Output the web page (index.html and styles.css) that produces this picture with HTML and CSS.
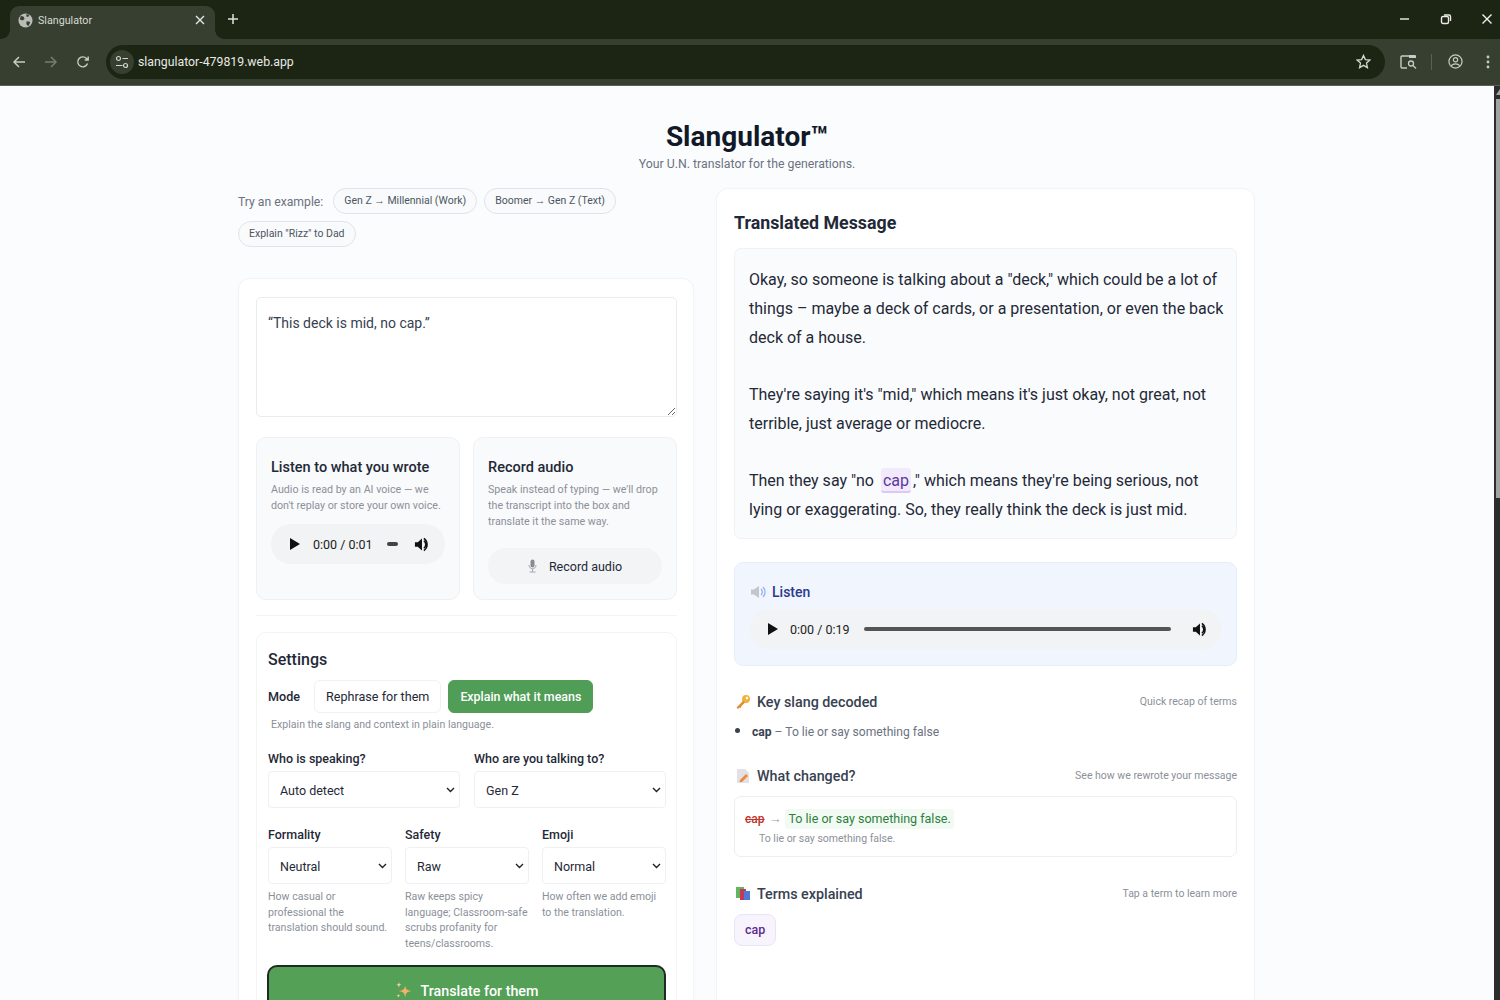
FILE: index.html
```html
<!DOCTYPE html>
<html lang="en">
<head>
    <meta charset="UTF-8">
    <meta name="viewport" content="width=device-width, initial-scale=1.0">
    <title>Slangulator</title>
    <link rel="stylesheet" href="styles.css">
</head>
<body>
    <div class="tabstrip">
        <div class="tab">
            <svg class="globe" width="15" height="15" viewBox="0 0 16 16"><circle cx="8" cy="8" r="7.5" fill="#b9bdb5"/><path d="M3 3l3 1 1 2-2 2-3-1zM9 9l3 0 1 1-2 4-2-2zM9 1l3 1-1 2-2 0z" fill="#363f30"/></svg>
            <span class="tab-title">Slangulator</span>
            <svg class="tab-x" width="10" height="10" viewBox="0 0 10 10"><path d="M1 1l8 8M9 1l-8 8" stroke="#e4e6e1" stroke-width="1.4"/></svg>
        </div>
        <svg class="newtab" width="12" height="12" viewBox="0 0 12 12"><path d="M6 1v10M1 6h10" stroke="#dfe2da" stroke-width="1.5"/></svg>
        <div class="winbtns">
            <svg width="12" height="12" viewBox="0 0 12 12"><path d="M1 6h9" stroke="#dfe2da" stroke-width="1.5"/></svg>
            <svg width="12" height="12" viewBox="0 0 12 12"><rect x="1.5" y="3.5" width="7" height="7" rx="1.5" fill="none" stroke="#e8eae5" stroke-width="1.4"/><path d="M4 2h5a1.5 1.5 0 0 1 1.500 1.500V8" fill="none" stroke="#e8eae5" stroke-width="1.400"/></svg>
            <svg width="12" height="12" viewBox="0 0 12 12"><path d="M1.500 1.500l9 9M10.500 1.500l-9 9" stroke="#f2f3f0" stroke-width="1.400"/></svg>
        </div>
    </div>
    <div class="toolbar">
        <svg class="nav" width="14" height="14" viewBox="0 0 14 14"><path d="M13 7H2M7 2L2 7l5 5" fill="none" stroke="#c9ccc5" stroke-width="1.500"/></svg>
        <svg class="nav" width="14" height="14" viewBox="0 0 14 14"><path d="M1 7h11M7 2l5 5-5 5" fill="none" stroke="#777d72" stroke-width="1.500"/></svg>
        <svg class="nav" width="14" height="14" viewBox="0 0 14 14"><path d="M11.500 8.500A5 5 0 1 1 10.500 3.500L12 5M12.200 1.500V5H8.700" fill="none" stroke="#c9ccc5" stroke-width="1.400"/></svg>
        <div class="urlbar">
            <span class="site-info">
                <svg width="14" height="14" viewBox="0 0 14 14"><circle cx="3.500" cy="3.500" r="2" fill="none" stroke="#d3d6cf" stroke-width="1.200"/><path d="M7.500 3.500H13M1 10.500h6.500" stroke="#d3d6cf" stroke-width="1.200"/><circle cx="10.500" cy="10.500" r="2" fill="none" stroke="#d3d6cf" stroke-width="1.200"/></svg>
            </span>
            <span class="url">slangulator-479819.web.app</span>
            <svg class="star" width="15" height="15" viewBox="0 0 16 16"><path d="M8 1.500l2 4.500 4.800.5-3.600 3.200 1 4.800L8 12.100l-4.200 2.400 1-4.800L1.200 6.500 6 6z" fill="none" stroke="#d3d6cf" stroke-width="1.400"/></svg>
        </div>
        <svg class="tool-search" width="17" height="16" viewBox="0 0 17 16"><path d="M10 2H2a1 1 0 0 0-1 1v10a1 1 0 0 0 1 1h5" fill="none" stroke="#c9ccc5" stroke-width="1.400"/><path d="M9 1h6a1 1 0 0 1 1 1v2H9z" fill="#c9ccc5"/><circle cx="11" cy="9.500" r="2.500" fill="none" stroke="#c9ccc5" stroke-width="1.300"/><path d="M13 11.500l3 3" stroke="#c9ccc5" stroke-width="1.300"/></svg>
        <span class="tool-sep"></span>
        <svg class="tool-profile" width="15" height="15" viewBox="0 0 16 16"><circle cx="8" cy="8" r="7" fill="none" stroke="#c9ccc5" stroke-width="1.300"/><circle cx="8" cy="6.200" r="2.300" fill="none" stroke="#c9ccc5" stroke-width="1.300"/><path d="M3.500 12.500c2-2.500 7-2.500 9 0" fill="none" stroke="#c9ccc5" stroke-width="1.300"/></svg>
        <svg class="tool-menu" width="4" height="14" viewBox="0 0 4 14"><circle cx="2" cy="2" r="1.400" fill="#c9ccc5"/><circle cx="2" cy="7" r="1.400" fill="#c9ccc5"/><circle cx="2" cy="12" r="1.400" fill="#c9ccc5"/></svg>
    </div>

    <div class="viewport">
        <div class="page">
            <header class="hero">
                <h1>Slangulator™</h1>
                <p>Your U.N. translator for the generations.</p>
            </header>

            <div class="columns">
                <div class="left">
                    <div class="examples">
                        <span class="examples-label">Try an example:</span>
                        <span class="chip">Gen Z → Millennial (Work)</span>
                        <span class="chip">Boomer → Gen Z (Text)</span>
                        <span class="chip">Explain "Rizz" to Dad</span>
                    </div>

                    <div class="card input-card">
                        <textarea class="message-box">“This deck is mid, no cap.”</textarea>

                        <div class="audio-row">
                            <div class="audio-panel">
                                <h3>Listen to what you wrote</h3>
                                <p>Audio is read by an AI voice — we don't replay or store your own voice.</p>
                                <div class="player player-small">
                                    <svg class="play" width="10" height="12" viewBox="0 0 10 12"><path d="M0 0l10 6-10 6z" fill="#111"/></svg>
                                    <span class="time">0:00 / 0:01</span>
                                    <span class="mini-track"></span>
                                    <svg class="vol" width="15" height="15" viewBox="0 0 16 16"><path d="M1 5.500h3L8.500 1.500v13L4 10.500H1z" fill="#111"/><path d="M10.500 4a5 5 0 0 1 0 8M10.500 1.500a8 8 0 0 1 3.500 6.500 8 8 0 0 1-3.500 6.500" fill="none" stroke="#111" stroke-width="1.500"/></svg>
                                </div>
                            </div>
                            <div class="audio-panel">
                                <h3>Record audio</h3>
                                <p>Speak instead of typing — we'll drop the transcript into the box and translate it the same way.</p>
                                <div class="record-btn">
                                    <svg width="9" height="14" viewBox="0 0 9 14"><rect x="2.500" y="0.500" width="4" height="8" rx="2" fill="#8b8a92"/><path d="M1 6c0 5 7 5 7 0M4.500 10v2.500M1.500 13h6" fill="none" stroke="#a3a2a8" stroke-width="1"/></svg>
                                    <span>Record audio</span>
                                </div>
                            </div>
                        </div>

                        <div class="divider"></div>

                        <div class="settings">
                            <h2>Settings</h2>
                            <div class="mode-row">
                                <span class="mode-label">Mode</span>
                                <span class="mode-btn">Rephrase for them</span>
                                <span class="mode-btn mode-active">Explain what it means</span>
                            </div>
                            <p class="mode-hint">Explain the slang and context in plain language.</p>

                            <div class="field-row two">
                                <label class="field">
                                    <span class="field-label">Who is speaking?</span>
                                    <select><option>Auto detect</option></select>
                                </label>
                                <label class="field">
                                    <span class="field-label">Who are you talking to?</span>
                                    <select><option>Gen Z</option></select>
                                </label>
                            </div>

                            <div class="field-row three">
                                <label class="field">
                                    <span class="field-label">Formality</span>
                                    <select><option>Neutral</option></select>
                                    <span class="field-hint">How casual or professional the translation should sound.</span>
                                </label>
                                <label class="field">
                                    <span class="field-label">Safety</span>
                                    <select><option>Raw</option></select>
                                    <span class="field-hint">Raw keeps spicy language; Classroom-safe scrubs profanity for teens/classrooms.</span>
                                </label>
                                <label class="field">
                                    <span class="field-label">Emoji</span>
                                    <select><option>Normal</option></select>
                                    <span class="field-hint">How often we add emoji to the translation.</span>
                                </label>
                            </div>

                            <button class="translate-btn" type="button">
                                <svg width="18" height="18" viewBox="0 0 16 16"><path d="M9 3c.6 3.500 1.500 4.400 6 5-4.500.6-5.400 1.500-6 6-.6-4.500-1.500-5.400-6-6 4.500-.6 5.400-1.500 6-5z" fill="#f3b26a"/><path d="M3.500 0c.3 1.700.8 2.200 2.500 2.500C4.300 2.800 3.800 3.300 3.500 5 3.200 3.300 2.700 2.800 1 2.500 2.700 2.200 3.200 1.700 3.500 0zM3 10.500c.2 1.200.6 1.600 1.800 1.800C3.600 12.500 3.200 12.900 3 14.100c-.2-1.200-.6-1.600-1.800-1.800 1.200-.2 1.600-.6 1.800-1.800z" fill="#f7cf9a"/></svg>
                                Translate for them
                            </button>
                        </div>
                    </div>
                </div>

                <div class="card output-card">
                    <h2 class="output-title">Translated Message</h2>
                    <div class="translation">
                        <p>Okay, so someone is talking about a "deck," which could be a lot of things – maybe a deck of cards, or a presentation, or even the back deck of a house.</p>
                        <p>They're saying it's "mid," which means it's just okay, not great, not terrible, just average or mediocre.</p>
                        <p>Then they say "no <span class="slang-mark">cap</span>," which means they're being serious, not lying or exaggerating. So, they really think the deck is just mid.</p>
                    </div>

                    <div class="listen-box">
                        <div class="listen-head">
                            <svg width="16" height="14" viewBox="0 0 16 14"><path d="M1 4.500h3L9 1v12L4 9.500H1z" fill="#c3c6cd"/><path d="M11 4a4 4 0 0 1 0 6M13 2a7 7 0 0 1 0 10" fill="none" stroke="#8fb4f2" stroke-width="1.300"/></svg>
                            <span>Listen</span>
                        </div>
                        <div class="player player-wide">
                            <svg class="play" width="10" height="12" viewBox="0 0 10 12"><path d="M0 0l10 6-10 6z" fill="#111"/></svg>
                            <span class="time">0:00 / 0:19</span>
                            <span class="track"></span>
                            <svg class="vol" width="15" height="15" viewBox="0 0 16 16"><path d="M1 5.500h3L8.500 1.500v13L4 10.500H1z" fill="#111"/><path d="M10.500 4a5 5 0 0 1 0 8M10.500 1.500a8 8 0 0 1 3.500 6.500 8 8 0 0 1-3.500 6.500" fill="none" stroke="#111" stroke-width="1.500"/></svg>
                        </div>
                    </div>

                    <div class="section-head section-key">
                        <div class="section-title">
                            <svg width="16" height="16" viewBox="0 0 16 16"><circle cx="11" cy="5" r="4" fill="#f2b33d"/><circle cx="12" cy="4" r="1.200" fill="#fff"/><path d="M8.500 6.500L1.500 13.500l1.500 1.500 1.500-1.500 1 .5 1-2 3.500-3.500z" fill="#e08a2e"/></svg>
                            <h3>Key slang decoded</h3>
                        </div>
                        <span class="section-note">Quick recap of terms</span>
                    </div>
                    <ul class="slang-list">
                        <li><strong>cap</strong> – To lie or say something false</li>
                    </ul>

                    <div class="section-head section-changed">
                        <div class="section-title">
                            <svg width="16" height="16" viewBox="0 0 16 16"><path d="M2 1h8l4 4v10H2z" fill="#e3e1e6"/><path d="M5 12l6-6 2 2-6 6H4.500z" fill="#ee8a3c"/></svg>
                            <h3>What changed?</h3>
                        </div>
                        <span class="section-note">See how we rewrote your message</span>
                    </div>
                    <div class="change-box">
                        <div class="change-line">
                            <span class="old-word">cap</span>
                            <span class="change-arrow">→</span>
                            <span class="new-words">To lie or say something false.</span>
                        </div>
                        <p class="change-note">To lie or say something false.</p>
                    </div>

                    <div class="section-head section-terms">
                        <div class="section-title">
                            <svg width="16" height="16" viewBox="0 0 16 16"><rect x="1" y="1" width="8" height="11" fill="#63b55e"/><rect x="5" y="3" width="6" height="11" fill="#c4395b"/><rect x="9" y="5" width="6" height="9" fill="#4f7bd6"/></svg>
                            <h3>Terms explained</h3>
                        </div>
                        <span class="section-note">Tap a term to learn more</span>
                    </div>
                    <span class="term-chip">cap</span>
                </div>
            </div>
        </div>
        <div class="scrollbar">
            <svg width="4" height="6" viewBox="0 0 4 6"><path d="M4 0v6H0z" fill="#a3a3a3"/></svg>
            <span class="scroll-thumb"></span>
        </div>
    </div>
</body>
</html>
```

FILE: styles.css
```css
* {
    box-sizing: border-box;
}
html, body {
    height: 100%;
}
body {
    margin: 0;
    height: 1000px;
    overflow: hidden;
    font-family: Roboto, "Open Sans", sans-serif;
    color: #1f2937;
    background: #fff;
}
h1, h2, h3, p, ul {
    margin: 0;
}

/* browser chrome */
.tabstrip {
    height: 39px;
    background: #1c2414;
    display: flex;
    align-items: flex-end;
    padding-left: 10px;
}
.tab {
    position: relative;
    width: 205px;
    height: 33px;
    background: #363f30;
    border-radius: 9px 9px 0 0;
    display: flex;
    align-items: center;
    padding: 0 10px 5px 8px;
    color: #d8dbd3;
    font-size: 10.700px;
}
.tab::before,
.tab::after {
    content: "";
    position: absolute;
    bottom: 0;
    width: 9px;
    height: 9px;
}
.tab::before {
    left: -9px;
    background: radial-gradient(circle at 0 0, #1c2414 8.500px, #363f30 9px);
}
.tab::after {
    right: -9px;
    background: radial-gradient(circle at 100% 0, #1c2414 8.500px, #363f30 9px);
}
.tab-title {
    margin-left: 5px;
    flex: 1;
}
.newtab {
    margin: 0 0 14px 12px;
}
.winbtns {
    margin-left: auto;
    display: flex;
    gap: 29px;
    padding: 0 7px 14px 0;
}
.toolbar {
    height: 47px;
    background: #363f30;
    border-bottom: 1px solid #5a6154;
    display: flex;
    align-items: center;
    padding: 0 8px 1px 12px;
}
.nav {
    margin-right: 18px;
}
.urlbar {
    margin-left: -2px;
    width: 1279px;
    height: 34px;
    background: #1c2414;
    border-radius: 17px;
    display: flex;
    align-items: center;
    padding: 0 14px 0 4px;
    color: #e8eae5;
    font-size: 12.300px;
}
.site-info {
    width: 24px;
    height: 24px;
    border-radius: 50%;
    background: #363f30;
    display: flex;
    align-items: center;
    justify-content: center;
    margin-right: 4px;
}
.star {
    margin-left: auto;
}
.tool-search {
    margin-left: 15px;
}
.tool-sep {
    width: 1px;
    height: 16px;
    background: #5a6154;
    margin: 0 16px 0 14px;
}
.tool-menu {
    margin-left: 23px;
}

/* page */
.viewport {
    display: flex;
    height: 914px;
    overflow: hidden;
}
.page {
    flex: 1;
    background: #fbfcfe;
    padding-top: 33px;
}
.hero {
    text-align: center;
    height: 69px;
}
.hero h1 {
    font-size: 28px;
    line-height: 36px;
    font-weight: 700;
    color: #111827;
}
.hero p {
    font-size: 12.300px;
    line-height: 18px;
    color: #6b7280;
}
.columns {
    display: grid;
    grid-template-columns: 456px 539px;
    gap: 22px;
    margin-left: 238px;
    align-items: start;
}
.card {
    background: #fff;
    border: 1px solid #f3f4f6;
    border-radius: 12px;
    box-shadow: 0 1px 3px rgba(0, 0, 0, 0.03);
}

/* left column */
.examples {
    display: flex;
    flex-wrap: wrap;
    align-items: center;
    gap: 7px;
    height: 90px;
    align-content: flex-start;
}
.examples-label {
    padding-top: 1px;
    font-size: 12.200px;
    color: #6b7280;
    margin-right: 3px;
}
.chip {
    height: 26px;
    line-height: 24px;
    padding: 0 10px;
    border: 1px solid #e0e3e8;
    border-radius: 13px;
    background: #f9fafb;
    font-size: 10.500px;
    color: #4b5563;
}
.input-card {
    padding: 18px 16px 0 17px;
    height: 800px;
}
.message-box {
    display: block;
    width: 100%;
    height: 120px;
    border: 1px solid #e9ebef;
    border-radius: 5px;
    padding: 17px 11px;
    font-family: inherit;
    font-size: 14px;
    color: #374151;
    background: #fff;
    outline: none;
}
.audio-row {
    display: grid;
    grid-template-columns: 204px 204px;
    gap: 13px;
    margin-top: 20px;
}
.audio-panel {
    height: 163px;
    background: #f9fafb;
    border: 1px solid #eff0f3;
    border-radius: 10px;
    padding: 20px 14px 0;
}
.audio-panel h3 {
    font-size: 14.500px;
    line-height: 20px;
    font-weight: 500;
    color: #1f2937;
}
.audio-panel p {
    margin-top: 4px;
    font-size: 10.700px;
    line-height: 16px;
    color: #8b9099;
}
.player {
    display: flex;
    align-items: center;
    background: #f1f3f4;
    border-radius: 20px;
    height: 40px;
    font-size: 12.500px;
    color: #222;
}
.player-small {
    margin-top: 10px;
    padding: 0 16px 0 19px;
}
.time {
    margin-left: 13px;
}
.mini-track {
    width: 11px;
    height: 4px;
    border-radius: 2px;
    background: #444;
    margin-left: 14px;
}
.player-small .vol {
    margin-left: auto;
}
.record-btn {
    margin-top: 18px;
    height: 36px;
    border-radius: 18px;
    background: #f3f4f6;
    display: flex;
    align-items: center;
    justify-content: center;
    gap: 12px;
    font-size: 12.500px;
    color: #1f2937;
}
.divider {
    height: 1px;
    background: #f3f4f6;
    margin-top: 15px;
}
.settings {
    margin-top: 16px;
    border: 1px solid #f3f4f6;
    border-radius: 10px 10px 0 0;
    padding: 16px 10px 0 11px;
    height: 500px;
}
.settings h2 {
    font-size: 16px;
    line-height: 22px;
    font-weight: 500;
    color: #1f2937;
}
.mode-row {
    display: flex;
    align-items: center;
    margin-top: 9px;
    font-size: 12.600px;
}
.mode-label {
    font-weight: 500;
    margin-right: 14px;
}
.mode-btn {
    height: 33px;
    line-height: 31px;
    border: 1px solid #f0f1f3;
    border-radius: 6px;
    padding: 0 11px;
    background: #fff;
    color: #1f2937;
    font-weight: 400;
}
.mode-active {
    margin-left: 7px;
    background: #4f9d57;
    border-color: #4f9d57;
    color: #fff;
    font-weight: 500;
    font-size: 12.400px;
}
.mode-hint {
    margin: 4px 0 0 3px;
    font-size: 10.600px;
    line-height: 16px;
    color: #8b9099;
}
.field-row {
    display: grid;
}
.two {
    grid-template-columns: 192px 192px;
    gap: 14px;
    margin-top: 17px;
}
.three {
    grid-template-columns: 124px 124px 124px;
    gap: 13px;
    margin-top: 18px;
}
.field {
    display: flex;
    flex-direction: column;
}
.field-label {
    font-size: 12.500px;
    line-height: 18px;
    font-weight: 500;
    color: #1f2937;
}
.field select {
    appearance: none;
    margin-top: 3px;
    height: 37px;
    border: 1px solid #eef0f2;
    border-radius: 4px;
    background: #fff url("data:image/svg+xml,%3Csvg xmlns='http://www.w3.org/2000/svg' width='9' height='6' viewBox='0 0 9 6'%3E%3Cpath d='M1 1l3.500 3.500L8 1' fill='none' stroke='%23222' stroke-width='1.400'/%3E%3C/svg%3E") no-repeat right 4px center;
    padding: 1px 7px 0 11px;
    font-family: inherit;
    font-size: 12.500px;
    color: #1f2937;
}
.field-hint {
    margin-top: 5px;
    font-size: 10.600px;
    line-height: 15.500px;
    color: #8b9099;
}
.translate-btn {
    display: flex;
    align-items: center;
    justify-content: center;
    gap: 8px;
    width: calc(100% + 1px);
    height: 50px;
    margin: 14px 0 0 -1px;
    padding: 1px 0 0;
    background: #53a056;
    border: 2px solid #1e2a22;
    border-radius: 10px;
    color: #fff;
    font-family: inherit;
    font-size: 14.300px;
    font-weight: 500;
}

/* right column */
.output-card {
    padding: 21px 17px 0;
    height: 830px;
}
.output-title {
    font-size: 17.800px;
    line-height: 26px;
    font-weight: 700;
    color: #1f2937;
}
.translation {
    margin-top: 12px;
    height: 291px;
    background: #fafbfd;
    border: 1px solid #f0f1f4;
    border-radius: 7px;
    padding: 16px 12px 16px 14px;
    font-size: 16px;
    line-height: 29px;
    color: #1f2937;
}
.translation p + p {
    margin-top: 28px;
}
.slang-mark {
    background: #f3e9fd;
    color: #5b3a9a;
    border-bottom: 2px solid #dcc8f5;
    border-radius: 3px;
    padding: 3px 2px 1px;
    margin: 0 2px 0 3px;
}
.listen-box {
    margin-top: 23px;
    height: 104px;
    background: #f0f5fe;
    border: 1px solid #e7eefb;
    border-radius: 9px;
    padding: 21px 15px 0;
}
.listen-head {
    display: flex;
    align-items: center;
    gap: 6px;
    font-size: 14px;
    font-weight: 500;
    color: #2a3a8c;
}
.player-wide {
    margin-top: 9px;
    padding: 0 14px 0 18px;
    font-size: 12.500px;
}
.player-wide .time {
    margin-left: 12px;
}
.track {
    flex: 1;
    height: 4px;
    border-radius: 2px;
    background: #555;
    margin: 0 21px 0 14px;
}
.section-head {
    display: flex;
    justify-content: space-between;
    align-items: center;
}
.section-title {
    display: flex;
    align-items: center;
    gap: 6px;
}
.section-title svg {
    margin-left: 1px;
}
.section-title h3 {
    font-size: 14.300px;
    line-height: 20px;
    font-weight: 500;
    color: #374151;
}
.section-note {
    font-size: 10.500px;
    color: #8b9099;
    margin-bottom: 2px;
}
.section-key {
    margin-top: 26px;
}
.slang-list {
    margin-top: 9px;
    padding-left: 18px;
    font-size: 12.100px;
    line-height: 20px;
    color: #6b7280;
}
.slang-list strong {
    color: #374151;
}
.slang-list li::marker {
    font-size: 16px;
    color: #374151;
}
.section-changed {
    margin-top: 24px;
}
.change-box {
    margin-top: 10px;
    height: 61px;
    border: 1px solid #eceef1;
    border-radius: 7px;
    padding: 12px 10px 0;
    background: #fff;
}
.change-line {
    display: flex;
    align-items: center;
    gap: 3px;
    font-size: 12.500px;
    line-height: 20px;
}
.old-word {
    color: #c0362f;
    font-size: 12px;
    font-weight: 500;
    text-decoration: line-through;
}
.change-arrow {
    color: #9ca3af;
    font-size: 13px;
    margin: 0 1px;
}
.new-words {
    background: #f1fbf3;
    color: #2f7d3f;
    padding: 0 3px;
    border-radius: 3px;
}
.change-note {
    margin: 2px 0 0 14px;
    font-size: 10.500px;
    line-height: 16px;
    color: #8b9099;
}
.section-terms {
    margin-top: 27px;
}
.term-chip {
    display: inline-block;
    margin-top: 10px;
    height: 32px;
    line-height: 30px;
    padding: 0 10px;
    background: #f8f4fe;
    border: 1px solid #ebe3f8;
    border-radius: 8px;
    font-size: 12.500px;
    font-weight: 500;
    color: #5b2a8f;
}

/* scrollbar */
.scrollbar {
    width: 6px;
    background: #2c2c2c;
    display: flex;
    flex-direction: column;
    align-items: flex-end;
    padding-top: 3px;
}
.scroll-thumb {
    margin-top: 4px;
    width: 4px;
    height: 399px;
    background: #a3a3a3;
}
```
